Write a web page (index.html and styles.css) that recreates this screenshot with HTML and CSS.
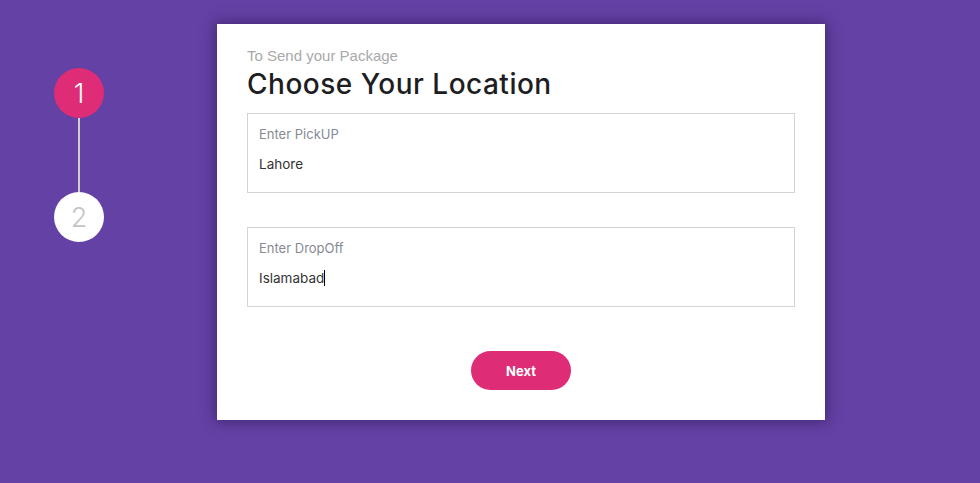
FILE: index.html
```html
<!DOCTYPE html>
<html>
<head>
<meta charset="utf-8">
<link rel="stylesheet" href="styles.css">
</head>
<body>
<div class="page">
  <div class="steps">
    <div class="step active">1</div>
    <div class="connector"></div>
    <div class="step">2</div>
  </div>
  <div class="card">
    <div class="subtitle">To Send your Package</div>
    <h1 class="title">Choose Your Location</h1>
    <div class="field">
      <div class="label">Enter PickUP</div>
      <div class="value">Lahore</div>
    </div>
    <div class="field field-second">
      <div class="label">Enter DropOff</div>
      <div class="value">Islamabad<span class="caret"></span></div>
    </div>
    <div class="actions">
      <button class="next">Next</button>
    </div>
  </div>
</div>
</body>
</html>
```
FILE: styles.css
```css
html, body {
  margin: 0;
  padding: 0;
  background: #6441a4;
  height: 100%;
}
.page {
  display: flex;
  align-items: flex-start;
  padding-top: 24px;
  padding-left: 54px;
}
.steps {
  display: flex;
  flex-direction: column;
  align-items: center;
  margin-top: 44px;
  width: 50px;
}
.step {
  width: 50px;
  height: 50px;
  border-radius: 50%;
  background: #fff;
  color: #c4c4c4;
  font-family: "Inter", "DejaVu Sans", sans-serif;
  font-weight: 300;
  font-size: 27px;
  display: flex;
  align-items: center;
  justify-content: center;
}
.step.active {
  background: #de2c76;
  color: #fff;
}
.connector {
  width: 2px;
  height: 74px;
  background: #cfcfcf;
}
.card {
  margin-left: 113px;
  width: 548px;
  height: 372px;
  background: #fff;
  padding: 24px 30px 0 30px;
  box-shadow: 0 0 12px 2px rgba(40, 20, 80, 0.55);
}
.subtitle {
  font-family: "Liberation Sans", Arial, sans-serif;
  font-size: 15px;
  color: #a9a9a9;
  line-height: 16px;
}
.title {
  margin: 3px 0 12px 0;
  font-family: "Inter", "DejaVu Sans", sans-serif;
  font-weight: 500;
  font-size: 28px;
  line-height: 34px;
  color: #1d1d23;
  letter-spacing: 0.5px;
}
.field {
  border: 1px solid #d3d3d3;
  height: 78px;
  padding: 0 11px;
  font-family: "Inter", "DejaVu Sans", sans-serif;
}
.field-second {
  margin-top: 34px;
}
.label {
  color: #858a93;
  font-size: 13px;
  margin-top: 11px;
  line-height: 18px;
}
.value {
  color: #333;
  font-size: 13.5px;
  margin-top: 12px;
  line-height: 18px;
}
.caret {
  display: inline-block;
  width: 1px;
  height: 16px;
  background: #000;
  vertical-align: -3px;
}
.actions {
  display: flex;
  justify-content: center;
  margin-top: 44px;
}
.next {
  width: 100px;
  height: 39px;
  border: none;
  border-radius: 20px;
  background: #de2c76;
  color: #fff;
  font-family: "Inter", "DejaVu Sans", sans-serif;
  font-weight: 700;
  font-size: 13px;
}
```
